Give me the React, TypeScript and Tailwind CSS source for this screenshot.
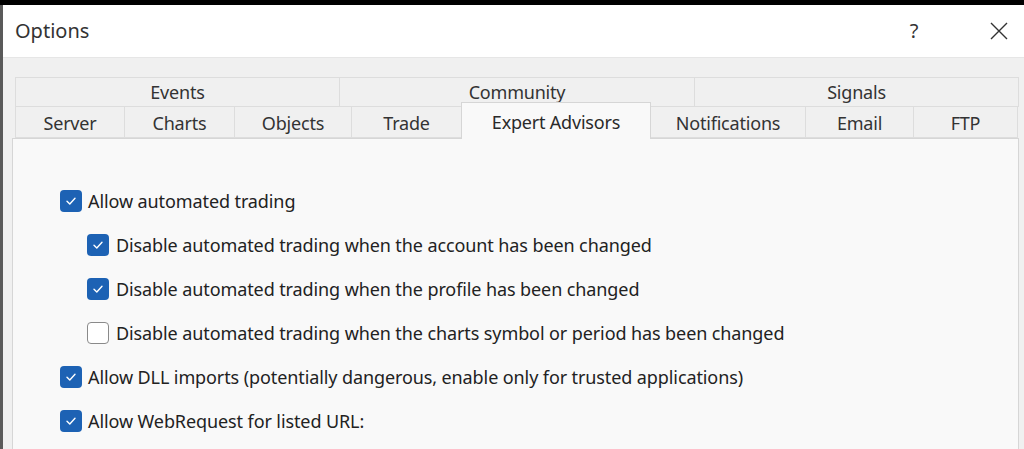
import React from "react";

const font = { fontFamily: '"Noto Sans", "Open Sans", sans-serif' };

function Check({ checked }: { checked: boolean }) {
  if (!checked) {
    return (
      <div className="w-[22px] h-[22px] rounded-[4px] border-[1.5px] border-[#8a8a8a] bg-white shrink-0" />
    );
  }
  return (
    <div className="w-[22px] h-[22px] rounded-[4px] bg-[#1d62b4] shrink-0 flex items-center justify-center">
      <svg width="12" height="12" viewBox="0 0 12 12" fill="none">
        <path d="M2 6.3 L4.8 9 L10 3.2" stroke="white" strokeWidth="1.4" strokeLinecap="round" strokeLinejoin="round" />
      </svg>
    </div>
  );
}

function Row({ checked, indent, label }: { checked: boolean; indent?: boolean; label: string }) {
  return (
    <div className={`h-[44px] flex items-center ${indent ? "pl-[27px] gap-[7px]" : "gap-[6px]"}`}>
      <Check checked={checked} />
      <span className="text-[18px] text-[#222222] tracking-[-0.1px] leading-none whitespace-nowrap">{label}</span>
    </div>
  );
}

const row1 = [
  { t: "Events", w: "w-[325px]" },
  { t: "Community", w: "w-[355px]" },
  { t: "Signals", w: "w-[324px]" },
];

const row2 = [
  { t: "Server", w: "w-[110px]" },
  { t: "Charts", w: "w-[110px]" },
  { t: "Objects", w: "w-[117px]" },
  { t: "Trade", w: "w-[110px]" },
  { t: "Expert Advisors", w: "w-[190px]", active: true },
  { t: "Notifications", w: "w-[155px]" },
  { t: "Email", w: "w-[108px]" },
  { t: "FTP", w: "w-[104px]" },
];

export default function App() {
  return (
    <div className="w-[1024px] h-[449px] bg-black pt-[5px] overflow-hidden flex flex-col" style={font}>
      <div className="flex-1 flex flex-col bg-[#f0f0f0] border-l-[3px] border-[#5a5a5a]">
        <div className="h-[52px] bg-white flex items-center pl-[12px] shrink-0">
          <span className="text-[20px] text-[#333333] tracking-[0px] flex-1">Options</span>
          <span className="text-[20px] text-[#333333] w-[20px] text-center mr-[66px]">?</span>
          <svg width="18" height="18" viewBox="0 0 18 18" className="mr-[16px]">
            <path d="M1 1 L17 17 M17 1 L1 17" stroke="#333333" strokeWidth="1.4" />
          </svg>
        </div>
        <div className="h-[1px] bg-[#e6e6e6]" />
        <div className="pt-[19px] pl-[9px] flex flex-col">
          <div className="pl-[3px] flex">
            {row1.map((r, i) => (
              <div
                key={r.t}
                className={`${r.w} h-[30px] flex items-center justify-center border-y border-r ${i === 0 ? "border-l" : ""} border-[#dddddd] bg-[#f0f0f0] text-[18px] text-[#333] tracking-[-0.2px]`}
              >
                {r.t}
              </div>
            ))}
          </div>
          <div className="pl-[3px] flex h-[32px] items-end -mt-[1px]">
            {row2.map((r, i) =>
              r.active ? (
                <div
                  key={r.t}
                  className={`${r.w} h-[37px] -mb-[1px] -ml-[1px] relative z-10 flex items-center justify-center pt-[3px] border border-b-0 border-[#d6d6d6] bg-[#f9f9f9] text-[18px] text-[#2a2a2a] tracking-[-0.2px]`}
                >
                  {r.t}
                </div>
              ) : (
                <div
                  key={r.t}
                  className={`${r.w} h-[32px] flex items-center justify-center pt-[3px] border-y border-r ${i === 0 ? "border-l" : ""} border-[#dddddd] bg-[#f0f0f0] text-[18px] text-[#333] tracking-[-0.2px]`}
                >
                  {r.t}
                </div>
              )
            )}
          </div>
          <div className="w-[1007px] h-[320px] bg-[#f9f9f9] border border-[#d6d6d6] pt-[40px] pl-[47px]">
            <Row checked label="Allow automated trading" />
            <Row checked indent label="Disable automated trading when the account has been changed" />
            <Row checked indent label="Disable automated trading when the profile has been changed" />
            <Row checked={false} indent label="Disable automated trading when the charts symbol or period has been changed" />
            <Row checked label="Allow DLL imports (potentially dangerous, enable only for trusted applications)" />
            <Row checked label="Allow WebRequest for listed URL:" />
          </div>
        </div>
      </div>
    </div>
  );
}
